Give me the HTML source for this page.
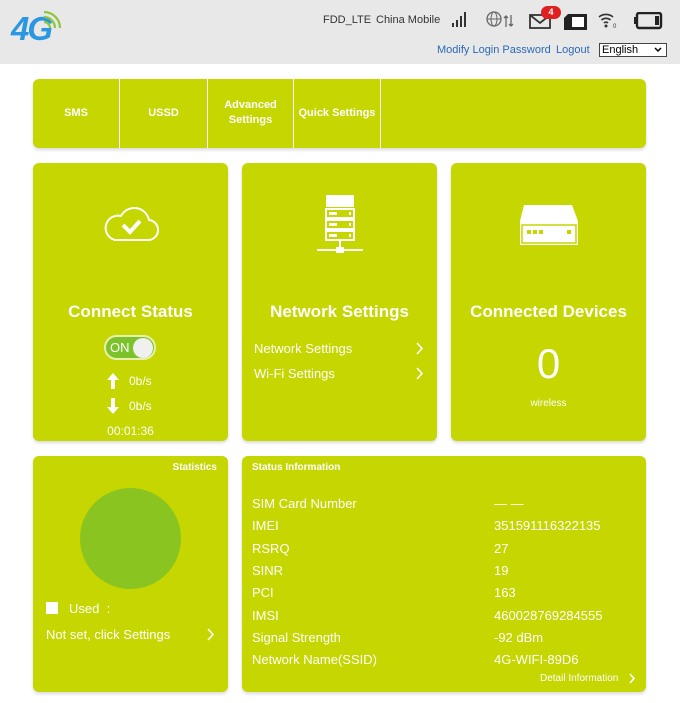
<!DOCTYPE html>
<html><head><meta charset="utf-8"><style>
*{margin:0;padding:0;box-sizing:border-box}
body{width:680px;height:703px;background:#fff;font-family:"Liberation Sans",Arial,sans-serif;position:relative;overflow:hidden;color:#fff}
.a{position:absolute}
.hdr{left:0;top:0;width:680px;height:64px;background:#e8e8e8}
.g{background:#c5d600;border-radius:6px;box-shadow:0 2px 3px rgba(0,0,0,.15)}
.t{white-space:nowrap}
.sep{width:1px;background:#fff;top:0;height:69px}
</style></head><body>
<div class="a hdr"></div>
<div class="a t" style="left:11px;top:10px;font-size:33px;font-weight:bold;font-style:italic;color:#2a97e0;letter-spacing:-2px">4G</div>
<svg class="a" style="left:40px;top:8px" width="24" height="22" viewBox="0 0 24 22"><path d="M4 14a6 6 0 0 1 6 6M4 9a11 11 0 0 1 11 11M4 4a16 16 0 0 1 16 16" fill="none" stroke="#8cc63f" stroke-width="2.2"/></svg>
<div class="a t" style="left:323px;top:14px;font-size:11px;color:#333">FDD_LTE</div>
<div class="a t" style="left:376px;top:14px;font-size:11px;color:#333">China Mobile</div>
<svg class="a" style="left:450px;top:10px" width="20" height="18"><rect x="2" y="13" width="2" height="4" fill="#333"/><rect x="6" y="10" width="2" height="7" fill="#333"/><rect x="10" y="6" width="2" height="11" fill="#333"/><rect x="14" y="2" width="2" height="15" fill="#333"/></svg>
<svg class="a" style="left:486px;top:11px" width="30" height="18"><circle cx="8" cy="8" r="7" fill="none" stroke="#666" stroke-width="1.3"/><ellipse cx="8" cy="8" rx="3" ry="7" fill="none" stroke="#666"/><line x1="1" y1="8" x2="15" y2="8" stroke="#666"/><path d="M20 16V5M18 7l2-2 2 2M25 4v11M23 13l2 2 2-2" stroke="#666" fill="none" stroke-width="1.3"/></svg>
<svg class="a" style="left:529px;top:12px" width="24" height="18"><rect x="1" y="3" width="20" height="13" fill="none" stroke="#333" stroke-width="1.8"/><path d="M1 3l10 8 10-8" fill="none" stroke="#333" stroke-width="1.8"/></svg>
<div class="a t" style="left:541px;top:6px;width:20px;height:13px;border-radius:7px;background:#e02020;font-size:9px;font-weight:bold;text-align:center;line-height:13px">4</div>
<svg class="a" style="left:563px;top:13px" width="26" height="18"><path d="M5 1h19v16H1V5z" fill="#222"/><rect x="9" y="4" width="12" height="10" fill="#fff"/></svg>
<svg class="a" style="left:597px;top:11px" width="22" height="18"><path d="M2 6a11 11 0 0 1 14 0M4.5 9a7 7 0 0 1 9 0M7 12a3 3 0 0 1 4 0" fill="none" stroke="#333" stroke-width="1.6"/><circle cx="9" cy="15" r="1.5" fill="#333"/><text x="16" y="17" font-size="6" fill="#333">0</text></svg>
<svg class="a" style="left:633px;top:12px" width="30" height="18"><rect x="4" y="1" width="24" height="15" rx="2" fill="none" stroke="#222" stroke-width="2.4"/><rect x="1" y="5" width="3" height="7" fill="#222"/><rect x="22" y="4" width="4" height="9" fill="#222"/></svg>
<div class="a t" style="left:437px;top:44px;font-size:11px;color:#2a6ab5">Modify Login Password</div>
<div class="a t" style="left:556px;top:44px;font-size:11px;color:#2a6ab5">Logout</div>
<div class="a t" style="left:599px;top:43px;width:68px;height:14px;border:1px solid #444;background:#fff;color:#000;font-size:11px;line-height:12px;padding-left:2px">English<svg style="position:absolute;right:4px;top:3px" width="8" height="6"><path d="M1 1l3 3 3-3" fill="none" stroke="#000" stroke-width="1.5"/></svg></div>

<div class="a g" style="left:33px;top:79px;width:613px;height:69px">
 <div class="a sep" style="left:86px"></div><div class="a sep" style="left:174px"></div><div class="a sep" style="left:260px"></div><div class="a sep" style="left:347px"></div>
 <div class="a t" style="left:0;width:86px;top:28px;text-align:center;font-size:11px;font-weight:bold">SMS</div>
 <div class="a t" style="left:87px;width:87px;top:28px;text-align:center;font-size:11px;font-weight:bold">USSD</div>
 <div class="a t" style="left:175px;width:85px;top:19px;text-align:center;font-size:11px;font-weight:bold;line-height:15px">Advanced<br>Settings</div>
 <div class="a t" style="left:261px;width:86px;top:28px;text-align:center;font-size:11px;font-weight:bold">Quick Settings</div>
</div>

<div class="a g" style="left:33px;top:163px;width:195px;height:278px">
 <svg class="a" style="left:70px;top:40px" width="56" height="40"><path d="M12 37h32a10 10 0 0 0 2-20 15 15 0 0 0-28-4 12 12 0 0 0-6 24z" fill="none" stroke="#fff" stroke-width="2"/><path d="M20 22l7 7 10-11" fill="none" stroke="#fff" stroke-width="4"/></svg>
 <div class="a t" style="left:0;width:195px;top:139px;text-align:center;font-size:17px;font-weight:bold">Connect Status</div>
 <div class="a" style="left:71px;top:172px;width:52px;height:25px;border-radius:13px;background:#7cc22b;border:2px solid #e8f0b0"></div>
 <div class="a t" style="left:77px;top:177px;font-size:13px">ON</div>
 <div class="a" style="left:100px;top:175px;width:20px;height:20px;border-radius:50%;background:#f0f0f0"></div>
 <svg class="a" style="left:74px;top:210px" width="12" height="16"><path d="M6 0L0 7h4v9h4V7h4z" fill="#fff"/></svg>
 <div class="a t" style="left:96px;top:211px;font-size:12px">0b/s</div>
 <svg class="a" style="left:74px;top:235px" width="12" height="16"><path d="M6 16L0 9h4V0h4v9h4z" fill="#fff"/></svg>
 <div class="a t" style="left:96px;top:236px;font-size:12px">0b/s</div>
 <div class="a t" style="left:0;width:195px;top:261px;text-align:center;font-size:12px">00:01:36</div>
</div>

<div class="a g" style="left:242px;top:163px;width:195px;height:278px">
 <svg class="a" style="left:74px;top:30px" width="50" height="66"><path d="M10 2h28v12H10z" fill="#fff"/><g fill="none" stroke="#fff" stroke-width="2"><rect x="10" y="16" width="28" height="9"/><rect x="10" y="27" width="28" height="9"/><rect x="10" y="38" width="28" height="9"/></g><g fill="#fff"><rect x="13" y="19" width="8" height="3"/><rect x="13" y="30" width="8" height="3"/><rect x="13" y="41" width="8" height="3"/><rect x="33" y="19" width="2" height="3"/><rect x="33" y="30" width="2" height="3"/><rect x="33" y="41" width="2" height="3"/><rect x="23" y="47" width="2" height="9"/><rect x="1" y="56" width="46" height="2"/><rect x="20" y="54" width="8" height="6"/></g></svg>
 <div class="a t" style="left:0;width:195px;top:139px;text-align:center;font-size:17px;font-weight:bold">Network Settings</div>
 <div class="a t" style="left:12px;top:178px;font-size:13px">Network Settings</div>
 <svg class="a" style="left:174px;top:179px" width="8" height="13"><path d="M1 1l5 5.5L1 12" fill="none" stroke="#fff" stroke-width="1.6"/></svg>
 <div class="a t" style="left:12px;top:203px;font-size:13px">Wi-Fi Settings</div>
 <svg class="a" style="left:174px;top:204px" width="8" height="13"><path d="M1 1l5 5.5L1 12" fill="none" stroke="#fff" stroke-width="1.6"/></svg>
</div>

<div class="a g" style="left:451px;top:163px;width:195px;height:278px">
 <svg class="a" style="left:67px;top:40px" width="62" height="44"><path d="M6 2h48l6 16v24H2V18z" fill="#fff"/><rect x="4" y="22" width="54" height="18" fill="none" stroke="#c5d600" stroke-width="1.5"/><g fill="#c5d600"><rect x="9" y="27" width="4" height="4"/><rect x="15" y="27" width="4" height="4"/><rect x="21" y="27" width="4" height="4"/><rect x="49" y="27" width="4" height="4"/></g></svg>
 <div class="a t" style="left:0;width:195px;top:139px;text-align:center;font-size:17px;font-weight:bold">Connected Devices</div>
 <div class="a t" style="left:0;width:195px;top:177px;text-align:center;font-size:42px">0</div>
 <div class="a t" style="left:0;width:195px;top:235px;text-align:center;font-size:10px">wireless</div>
</div>

<div class="a g" style="left:33px;top:456px;width:195px;height:236px">
 <div class="a t" style="right:11px;top:6px;font-size:10px;font-weight:bold">Statistics</div>
 <div class="a" style="left:47px;top:32px;width:101px;height:101px;border-radius:50%;background:#8ac420"></div>
 <div class="a" style="left:13px;top:146px;width:12px;height:12px;background:#fff"></div>
 <div class="a t" style="left:36px;top:145px;font-size:13px">Used &nbsp;:</div>
 <div class="a t" style="left:13px;top:171px;font-size:13px">Not set, click Settings</div>
 <svg class="a" style="left:174px;top:172px" width="8" height="13"><path d="M1 1l5 5.5L1 12" fill="none" stroke="#fff" stroke-width="1.6"/></svg>
</div>

<div class="a g" style="left:242px;top:456px;width:404px;height:236px;font-size:13px">
 <div class="a t" style="left:10px;top:6px;font-size:10px;font-weight:bold">Status Information</div>
 <div class="a t" style="left:10px;top:40px">SIM Card Number</div><div class="a t" style="left:252px;top:40px">— —</div>
 <div class="a t" style="left:10px;top:62px">IMEI</div><div class="a t" style="left:252px;top:62px">351591116322135</div>
 <div class="a t" style="left:10px;top:85px">RSRQ</div><div class="a t" style="left:252px;top:85px">27</div>
 <div class="a t" style="left:10px;top:107px">SINR</div><div class="a t" style="left:252px;top:107px">19</div>
 <div class="a t" style="left:10px;top:129px">PCI</div><div class="a t" style="left:252px;top:129px">163</div>
 <div class="a t" style="left:10px;top:152px">IMSI</div><div class="a t" style="left:252px;top:152px">460028769284555</div>
 <div class="a t" style="left:10px;top:174px">Signal Strength</div><div class="a t" style="left:252px;top:174px">-92 dBm</div>
 <div class="a t" style="left:10px;top:196px">Network Name(SSID)</div><div class="a t" style="left:252px;top:196px">4G-WIFI-89D6</div>
 <div class="a t" style="left:298px;top:217px;font-size:10px">Detail Information</div>
 <svg class="a" style="left:387px;top:217px" width="7" height="11"><path d="M1 1l4 4.5L1 10" fill="none" stroke="#fff" stroke-width="1.6"/></svg>
</div>
</body></html>
